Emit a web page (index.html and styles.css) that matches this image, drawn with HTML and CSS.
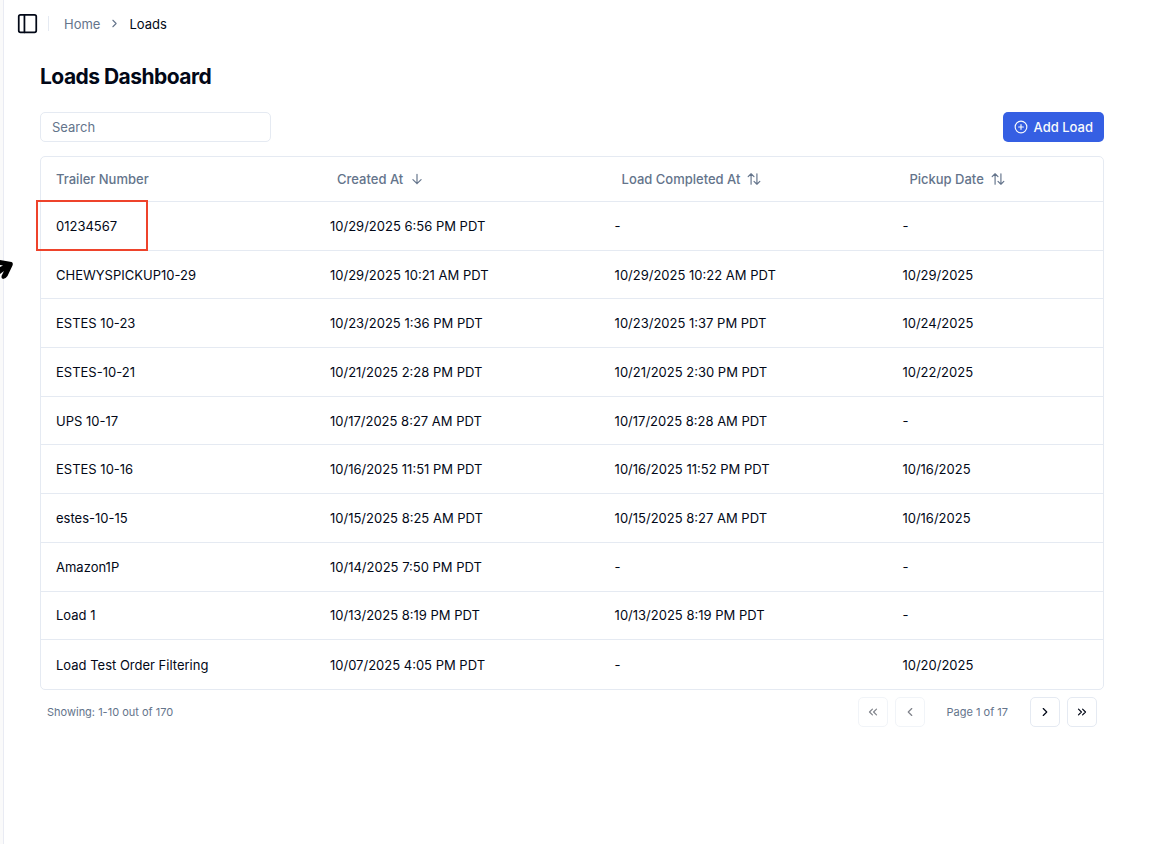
FILE: index.html
```html
<!DOCTYPE html>
<html lang="en">
  <head>
    <meta charset="UTF-8" />
    <meta name="viewport" content="width=device-width, initial-scale=1.0" />
    <title>Loads Dashboard</title>
    <link rel="stylesheet" href="styles.css">
  </head>
  <body>
    <aside class="sidebar-edge"></aside>

    <div class="page">
      <header class="topbar">
        <button class="sidebar-toggle" type="button" aria-label="Toggle sidebar">
          <svg class="icon-panel" viewBox="0 0 24 24">
            <rect x="2" y="2" width="20" height="20" rx="2" />
            <path d="M8.500 2v20" />
          </svg>
        </button>
        <span class="divider"></span>
        <nav class="breadcrumb" aria-label="Breadcrumb">
          <a href="#">Home</a>
          <svg class="icon-crumb" viewBox="0 0 24 24"><path d="m9 18 6-6-6-6" /></svg>
          <a href="#" class="current" aria-current="page">Loads</a>
        </nav>
      </header>

      <main class="content">
        <h1>Loads Dashboard</h1>

        <div class="toolbar">
          <input class="search" type="search" placeholder="Search" aria-label="Search" />
          <button class="add-button" type="button">
            <svg class="icon" viewBox="0 0 24 24">
              <circle cx="12" cy="12" r="10" />
              <path d="M8 12h8M12 8v8" />
            </svg>
            Add Load
          </button>
        </div>

        <div class="table-card">
          <table class="loads">
            <colgroup>
              <col class="col-trailer" />
              <col class="col-created" />
              <col class="col-completed" />
              <col class="col-pickup" />
            </colgroup>
            <thead>
              <tr>
                <th scope="col">Trailer Number</th>
                <th scope="col">
                  <button class="sort" type="button">
                    Created At
                    <svg class="icon" viewBox="0 0 24 24"><path d="M12 4v16M19 13l-7 7-7-7" /></svg>
                  </button>
                </th>
                <th scope="col">
                  <button class="sort" type="button">
                    Load Completed At
                    <svg class="icon" viewBox="0 0 24 24"><path d="M2 8l5-5 5 5M7 3v18M22 16l-5 5-5-5M17 21V3" /></svg>
                  </button>
                </th>
                <th scope="col">
                  <button class="sort" type="button">
                    Pickup Date
                    <svg class="icon" viewBox="0 0 24 24"><path d="M2 8l5-5 5 5M7 3v18M22 16l-5 5-5-5M17 21V3" /></svg>
                  </button>
                </th>
              </tr>
            </thead>
            <tbody>
              <tr>
                <td class="marked">01234567<span class="mark"></span></td>
                <td>10/29/2025 6:56 PM PDT</td>
                <td>-</td>
                <td>-</td>
              </tr>
              <tr>
                <td>CHEWYSPICKUP10-29</td>
                <td>10/29/2025 10:21 AM PDT</td>
                <td>10/29/2025 10:22 AM PDT</td>
                <td>10/29/2025</td>
              </tr>
              <tr>
                <td>ESTES 10-23</td>
                <td>10/23/2025 1:36 PM PDT</td>
                <td>10/23/2025 1:37 PM PDT</td>
                <td>10/24/2025</td>
              </tr>
              <tr>
                <td>ESTES-10-21</td>
                <td>10/21/2025 2:28 PM PDT</td>
                <td>10/21/2025 2:30 PM PDT</td>
                <td>10/22/2025</td>
              </tr>
              <tr>
                <td>UPS 10-17</td>
                <td>10/17/2025 8:27 AM PDT</td>
                <td>10/17/2025 8:28 AM PDT</td>
                <td>-</td>
              </tr>
              <tr>
                <td>ESTES 10-16</td>
                <td>10/16/2025 11:51 PM PDT</td>
                <td>10/16/2025 11:52 PM PDT</td>
                <td>10/16/2025</td>
              </tr>
              <tr>
                <td>estes-10-15</td>
                <td>10/15/2025 8:25 AM PDT</td>
                <td>10/15/2025 8:27 AM PDT</td>
                <td>10/16/2025</td>
              </tr>
              <tr>
                <td>Amazon1P</td>
                <td>10/14/2025 7:50 PM PDT</td>
                <td>-</td>
                <td>-</td>
              </tr>
              <tr>
                <td>Load 1</td>
                <td>10/13/2025 8:19 PM PDT</td>
                <td>10/13/2025 8:19 PM PDT</td>
                <td>-</td>
              </tr>
              <tr>
                <td>Load Test Order Filtering</td>
                <td>10/07/2025 4:05 PM PDT</td>
                <td>-</td>
                <td>10/20/2025</td>
              </tr>
            </tbody>
          </table>
        </div>

        <footer class="pagination">
          <span>Showing: 1-10 out of 170</span>
          <div class="pager">
            <button type="button" aria-label="First page" disabled>
              <svg class="icon" viewBox="0 0 24 24"><path d="m11 17-5-5 5-5M18 17l-5-5 5-5" /></svg>
            </button>
            <button type="button" aria-label="Previous page" disabled>
              <svg class="icon" viewBox="0 0 24 24"><path d="m15 18-6-6 6-6" /></svg>
            </button>
            <span class="page-count">Page 1 of 17</span>
            <button type="button" aria-label="Next page">
              <svg class="icon" viewBox="0 0 24 24"><path d="m9 18 6-6-6-6" /></svg>
            </button>
            <button type="button" aria-label="Last page">
              <svg class="icon" viewBox="0 0 24 24"><path d="m6 17 5-5-5-5M13 17l5-5-5-5" /></svg>
            </button>
          </div>
        </footer>
      </main>
    </div>

    <svg class="arrow-tip" viewBox="0 0 14 20">
      <path d="M0 0L11.500 2Q13.500 3 12.500 5.500L7.500 16Q6 18.500 3 19Q1 18.500 1.500 16L4 11L0 14V7L3 5.500L0 5Z" />
    </svg>
  </body>
</html>
```

FILE: styles.css
```css
:root {
  --text: #020817;
  --muted: #64748b;
  --border: #e5eaf2;
  --primary: #355fe3;
  --mark: #ee432b;
}

* {
  box-sizing: border-box;
}

body {
  margin: 0;
  min-height: 100vh;
  display: flex;
  background: #fff;
  color: var(--text);
  font-family: "Inter", sans-serif;
  font-size: 13px;
  line-height: 18px;
}

button,
input {
  font: inherit;
  color: inherit;
}
button {
  padding: 0;
  border: 0;
  background: none;
  cursor: pointer;
}
a {
  color: inherit;
  text-decoration: none;
}
svg {
  display: block;
  flex: none;
  fill: none;
  stroke: currentColor;
  stroke-width: 2;
  stroke-linecap: round;
  stroke-linejoin: round;
}
.icon {
  width: 14px;
  height: 14px;
}

.sidebar-edge {
  width: 4px;
  flex: none;
  background: #fafafa;
  border-right: 1px solid #e9ebf3;
}
.page {
  flex: 1;
  min-width: 0;
}

/* Top bar */
.topbar {
  display: flex;
  align-items: center;
  height: 47px;
  padding-left: 13px;
}
.icon-panel {
  width: 21px;
  height: 21px;
}
.divider {
  width: 1px;
  height: 15px;
  margin: 0 15px 0 10px;
  background: var(--border);
}
.breadcrumb {
  display: flex;
  align-items: center;
  gap: 8px;
  color: var(--muted);
}
.breadcrumb .current {
  color: var(--text);
}
.icon-crumb {
  width: 13px;
  height: 13px;
}

.content {
  padding: 16px 50px 24px 36px;
}
h1 {
  margin: 0 0 21px;
  font-size: 21px;
  font-weight: 700;
  line-height: 28px;
  letter-spacing: -0.025em;
}

.toolbar {
  display: flex;
  align-items: center;
  justify-content: space-between;
  margin-bottom: 14px;
}
.search {
  width: 231px;
  height: 30px;
  padding: 0 11px;
  border: 1px solid var(--border);
  border-radius: 5px;
  background: #fff;
  appearance: none;
}
.search::placeholder {
  color: var(--muted);
}
.add-button {
  display: flex;
  align-items: center;
  gap: 6px;
  height: 30px;
  padding: 0 11px;
  border-radius: 5px;
  background: var(--primary);
  color: #f8fafc;
  font-weight: 500;
}

/* Loads table */
.table-card {
  border: 1px solid var(--border);
  border-radius: 5px;
}
.loads {
  width: 100%;
  height: 532px;
  table-layout: fixed;
  border-spacing: 0;
}
.col-trailer {
  width: 25.8%;
}
.col-created {
  width: 26.8%;
}
.col-completed {
  width: 27.1%;
}
.loads th,
.loads td {
  padding: 0 15px;
  text-align: left;
  border-bottom: 1px solid var(--border);
}
.loads th {
  height: 45px;
  color: var(--muted);
  font-weight: 500;
}
.loads td {
  height: 48px;
}
.loads tbody tr:last-child td {
  border-bottom: 0;
}
.sort {
  display: flex;
  align-items: center;
  gap: 7px;
  padding: 0 7px;
}

/* Highlight around the first trailer number */
.marked {
  position: relative;
}
.mark {
  position: absolute;
  top: -2px;
  bottom: -1px;
  left: -5px;
  width: 112px;
  border: 2px solid var(--mark);
}

.pagination {
  display: flex;
  align-items: center;
  justify-content: space-between;
  padding: 7px 7px 0;
  color: var(--muted);
  font-size: 11px;
}
.pager {
  display: flex;
  align-items: center;
  gap: 7px;
}
.pager button {
  display: grid;
  place-items: center;
  width: 30px;
  height: 30px;
  border: 1px solid var(--border);
  border-radius: 5px;
  color: var(--text);
}
.pager button:disabled {
  opacity: 0.5;
  cursor: default;
}
.page-count {
  padding: 0 15px;
}

.arrow-tip {
  position: absolute;
  top: 260px;
  left: 0;
  width: 14px;
  height: 20px;
  fill: #000;
  stroke: none;
}
```
